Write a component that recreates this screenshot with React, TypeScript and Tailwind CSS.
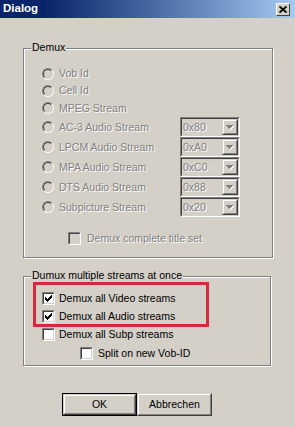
import React from "react";

const sunkenOuter = "border border-t-[#808080] border-l-[#808080] border-b-white border-r-white";
const sunkenInner = "border border-t-[#404040] border-l-[#404040] border-b-[#d4d0c8] border-r-[#d4d0c8]";
const raisedOuter = "border border-t-[#d4d0c8] border-l-[#d4d0c8] border-b-[#404040] border-r-[#404040]";
const raisedInner = "border border-t-white border-l-white border-b-[#808080] border-r-[#808080]";
const disabledText = "text-[#808080] [text-shadow:1px_1px_0_#fff]";

function Radio() {
  return (
    <span className={`box-border flex h-[12px] w-[12px] shrink-0 rounded-full ${sunkenOuter}`}>
      <span className={`box-border h-full w-full rounded-full bg-[#d4d0c8] ${sunkenInner}`} />
    </span>
  );
}

function Check({ checked = false, disabled = false }: { checked?: boolean; disabled?: boolean }) {
  return (
    <span className={`box-border flex h-[13px] w-[13px] shrink-0 ${sunkenOuter}`}>
      <span
        className={`box-border flex h-full w-full items-center justify-center ${sunkenInner} ${
          disabled ? "bg-[#d4d0c8]" : "bg-white"
        }`}
      >
        {checked && (
          <svg width="7" height="7" viewBox="0 0 7 7" shapeRendering="crispEdges">
            <path d="M0 2h1v1h1v1h1V3h1V2h1V1h1V0h1v3H6v1H5v1H4v1H3v1H2V6H1V5H0z" fill="#000" />
          </svg>
        )}
      </span>
    </span>
  );
}

function Combo({ value }: { value: string }) {
  return (
    <div className={`box-border flex h-[20px] w-[60px] ${sunkenOuter}`}>
      <div className={`box-border flex flex-1 items-center bg-[#d4d0c8] ${sunkenInner}`}>
        <span className={`flex-1 pl-[1px] leading-none ${disabledText}`}>{value}</span>
        <span className={`box-border flex h-full w-[16px] ${raisedOuter}`}>
          <span className={`box-border flex flex-1 items-center justify-center ${raisedInner}`}>
            <svg width="8" height="5" viewBox="0 0 8 5" shapeRendering="crispEdges">
              <path d="M1 1h7L4.5 5z" fill="#fff" />
              <path d="M0 0h7L3.5 4z" fill="#808080" />
            </svg>
          </span>
        </span>
      </div>
    </div>
  );
}

function Group({ label, className, children }: { label: string; className: string; children: React.ReactNode }) {
  return (
    <div className={`relative border border-[#808080] shadow-[inset_1px_1px_0_#fff,1px_1px_0_#fff] ${className}`}>
      <span className="absolute left-[7px] top-[-9px] bg-[#d4d0c8] px-[1px] leading-[14px]">{label}</span>
      {children}
    </div>
  );
}

function RadioRow({ label, h, combo }: { label: string; h: string; combo?: string }) {
  return (
    <div className={`flex items-center pl-[18px] ${h}`}>
      <Radio />
      <span className={`ml-[5px] w-[121px] leading-none ${disabledText}`}>{label}</span>
      {combo && <Combo value={combo} />}
    </div>
  );
}

function Button({ label, isDefault = false }: { label: string; isDefault?: boolean }) {
  return (
    <div className={`box-border flex h-[23px] w-[75px] ${isDefault ? "border border-black" : ""}`}>
      <div className={`box-border flex flex-1 ${raisedOuter}`}>
        <div className={`box-border flex flex-1 items-center justify-center text-black ${raisedInner}`}>{label}</div>
      </div>
    </div>
  );
}

export default function App() {
  return (
    <div className="relative h-[427px] w-[295px] overflow-hidden bg-[#d4d0c8] text-[10.5px] text-black [font-family:'Liberation_Sans',Arial,sans-serif]">
      <div className="flex h-[18px] items-center justify-between bg-gradient-to-r from-[#0a246a] from-15% to-[#a6caf0] pl-[3px] pr-[5px]">
        <span className="text-[11.5px] font-bold leading-none text-white">Dialog</span>
        <span className={`box-border flex h-[13px] w-[14px] ${raisedOuter} border-t-white border-l-white`}>
          <span className="flex flex-1 items-center justify-center bg-[#d4d0c8]">
            <svg width="8" height="7" viewBox="0 0 8 7">
              <path d="M0.5 0.5L7.5 6.5M7.5 0.5L0.5 6.5" stroke="#000" strokeWidth="1.8" />
            </svg>
          </span>
        </span>
      </div>

      <div className="flex flex-col px-[23px] pt-[30px]">
        <Group label="Demux" className="mr-[-1px] pb-[9px] pt-[16px]">
          <RadioRow label="Vob Id" h="h-[17px]" />
          <RadioRow label="Cell Id" h="h-[17px]" />
          <RadioRow label="MPEG Stream" h="h-[18px]" />
          <RadioRow label="AC-3 Audio Stream" h="h-[20px]" combo="0x80" />
          <RadioRow label="LPCM Audio Stream" h="h-[20px]" combo="0xA0" />
          <RadioRow label="MPA Audio Stream" h="h-[20px]" combo="0xC0" />
          <RadioRow label="DTS Audio Stream" h="h-[20px]" combo="0x88" />
          <RadioRow label="Subpicture Stream" h="h-[20px]" combo="0x20" />
          <div className="mt-[12px] flex h-[19px] items-center pl-[44px]">
            <Check disabled />
            <span className={`ml-[6px] leading-none ${disabledText}`}>Demux complete title set</span>
          </div>
        </Group>

        <Group label="Dumux multiple streams at once" className="mr-[1px] mt-[18px] pb-[3px] pt-[12px]">
          <div className="flex h-[18px] items-center pl-[18px]">
            <Check checked />
            <span className="ml-[4px] leading-none">Demux all Video streams</span>
          </div>
          <div className="flex h-[18px] items-center pl-[18px]">
            <Check checked />
            <span className="ml-[4px] leading-none">Demux all Audio streams</span>
          </div>
          <div className="flex h-[18px] items-center pl-[18px]">
            <Check />
            <span className="ml-[4px] leading-none">Demux all Subp streams</span>
          </div>
          <div className="mt-[1px] flex h-[18px] items-center pl-[56px]">
            <Check />
            <span className="ml-[5px] leading-none">Split on new Vob-ID</span>
          </div>
        </Group>

        <div className="mt-[27px] flex pl-[39px]">
          <Button label="OK" isDefault />
          <Button label="Abbrechen" />
        </div>
      </div>

      <div className="pointer-events-none absolute left-[33px] top-[282px] h-[45px] w-[176px] border-[3px] border-[#d6283f]" />
    </div>
  );
}
